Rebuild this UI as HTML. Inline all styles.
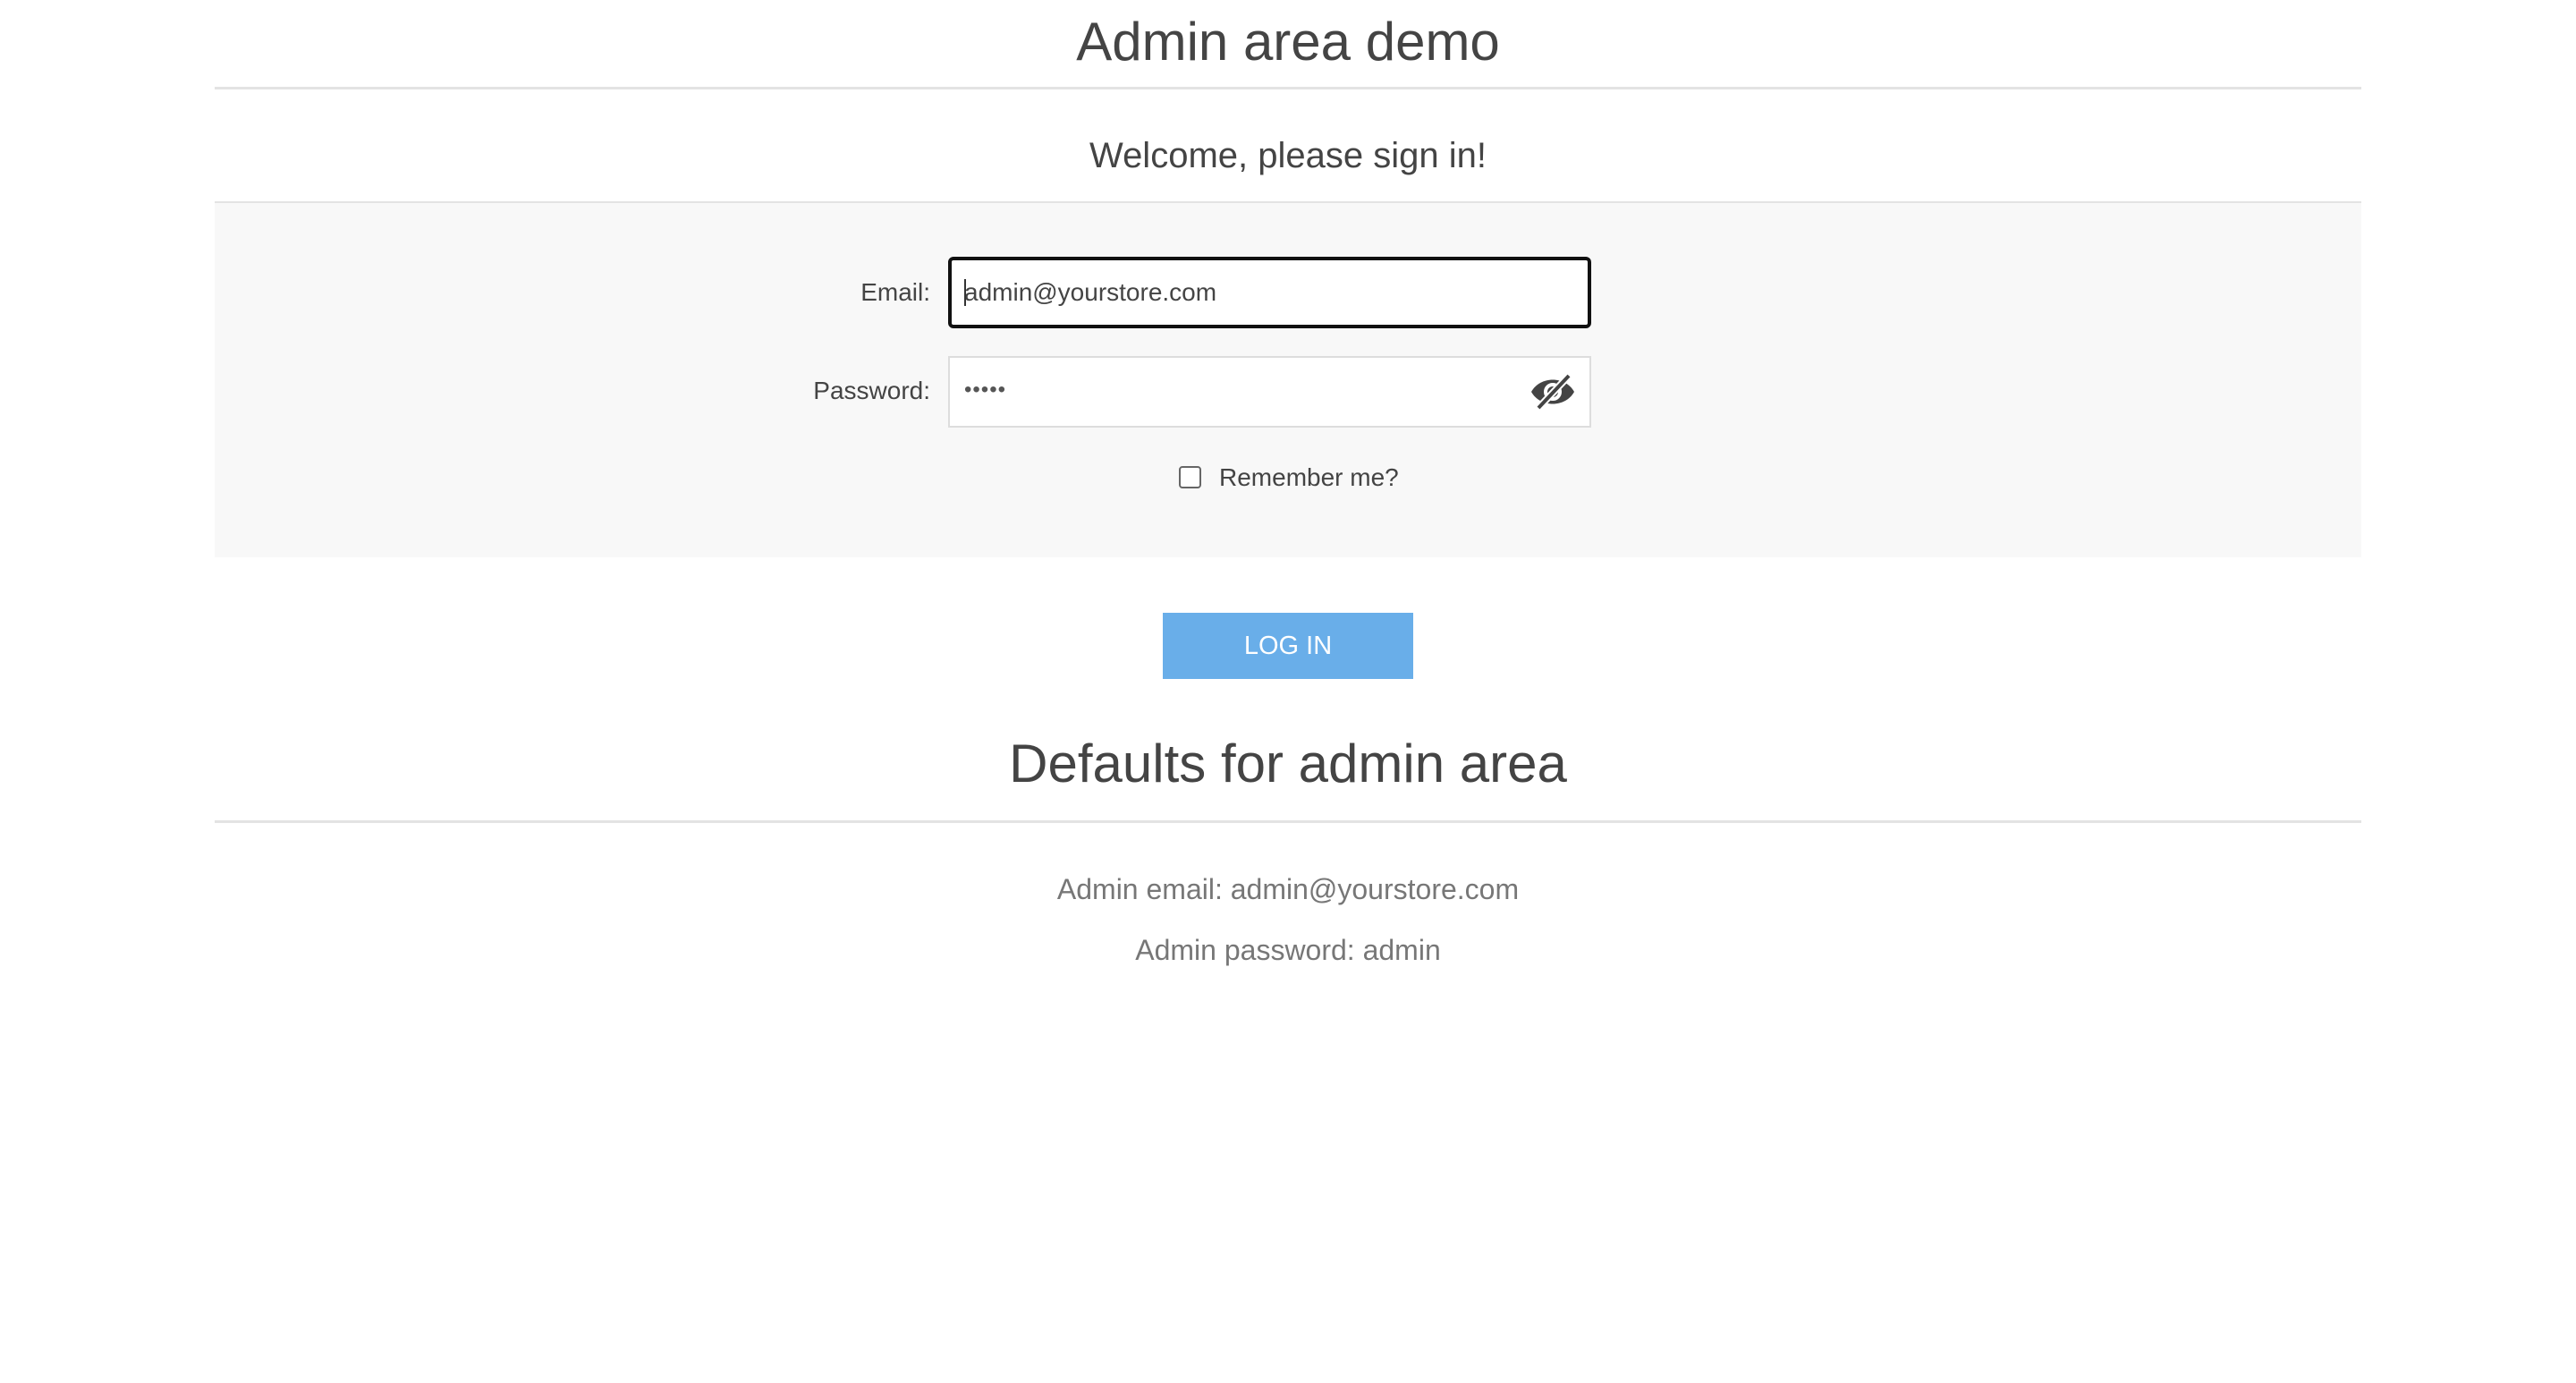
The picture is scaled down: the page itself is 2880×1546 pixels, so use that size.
<!DOCTYPE html>
<html><head><meta charset="utf-8"><style>
*{box-sizing:border-box;margin:0;padding:0}
html,body{width:2880px;height:1546px;background:#fff;font-family:"Liberation Sans",Arial,sans-serif;color:#444;overflow:hidden;position:relative}
.a{position:absolute}
.c{left:0;width:2880px;text-align:center;white-space:nowrap}
.hr{left:240px;width:2400px;height:3px;background:#e3e3e3}
</style></head><body>
<div class="a c" style="top:8px;font-size:60px;line-height:78px">Admin area demo</div>
<div class="a hr" style="top:97px"></div>
<div class="a c" style="top:146px;font-size:40px;line-height:56px">Welcome, please sign in!</div>
<div class="a hr" style="top:225px"></div>
<div class="a" style="left:240px;top:227px;width:2400px;height:396px;background:#f8f8f8"></div>
<div class="a" style="left:800px;width:240px;top:309px;text-align:right;font-size:28px;line-height:36px">Email:</div>
<div class="a" style="left:1060px;top:287px;width:719px;height:80px;border:4px solid #111;border-radius:6px;background:#fff"></div>
<div class="a" style="left:1078px;top:309px;font-size:28px;line-height:36px;color:#444">admin@yourstore.com</div>
<div class="a" style="left:1078px;top:312px;width:2px;height:30px;background:#333"></div>
<div class="a" style="left:800px;width:240px;top:419px;text-align:right;font-size:28px;line-height:36px">Password:</div>
<div class="a" style="left:1060px;top:398px;width:719px;height:80px;border:2px solid #ddd;background:#fff"></div>
<div class="a" style="left:1078px;top:421px;font-size:24px;line-height:30px;color:#555;letter-spacing:1px">•••••</div>
<svg class="a" style="left:1708px;top:416px" width="56" height="44" viewBox="0 0 56 44">
<path d="M4 22 C14 4 42 4 52 22 C42 40 14 40 4 22Z" fill="#444"/>
<circle cx="28" cy="22" r="8" fill="none" stroke="#fff" stroke-width="4"/>
<line x1="46" y1="4" x2="12" y2="40" stroke="#fff" stroke-width="8"/>
<line x1="46" y1="4" x2="12" y2="40" stroke="#444" stroke-width="4"/>
</svg>
<div class="a" style="left:1318px;top:521px;width:25px;height:25px;border:2px solid #666;border-radius:4px;background:#fff"></div>
<div class="a" style="left:1363px;top:516px;font-size:28px;line-height:36px">Remember me?</div>
<div class="a" style="left:1300px;top:685px;width:280px;height:74px;background:#69aee9;color:#fff;font-size:29px;line-height:74px;text-align:center">LOG IN</div>
<div class="a c" style="top:815px;font-size:60px;line-height:78px">Defaults for admin area</div>
<div class="a hr" style="top:917px"></div>
<div class="a c" style="top:975px;font-size:32px;line-height:38px;color:#777">Admin email: admin@yourstore.com</div>
<div class="a c" style="top:1043px;font-size:32px;line-height:38px;color:#777">Admin password: admin</div>
</body></html>
